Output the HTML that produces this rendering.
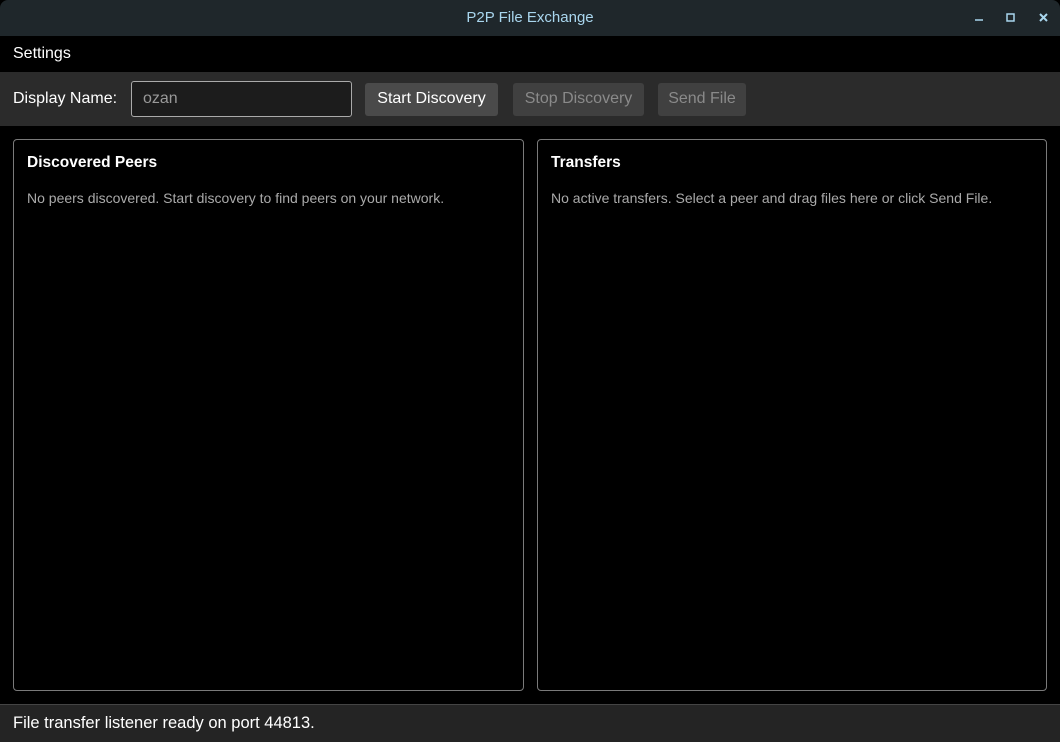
<!DOCTYPE html>
<html><head><style>
*{margin:0;padding:0;box-sizing:border-box}
body{width:1060px;height:742px;background:#000;font-family:"Liberation Sans",sans-serif;position:relative;overflow:hidden}
.tb{position:absolute;left:0;top:0;width:1060px;height:36px;background:#1f272b;border-radius:8px 8px 0 0}
.tb .t{position:absolute;left:0;right:0;top:9px;text-align:center;color:#a9d6ee;font-size:15px}
.menu{position:absolute;top:36px;left:0;width:1060px;height:36px;color:#fff;font-size:16px;padding:9px 13px}
.tool{position:absolute;top:72px;left:0;width:1060px;height:54px;background:#2b2b2b}
.lbl{position:absolute;left:13px;top:18px;color:#fff;font-size:16px}
.inp{position:absolute;left:131px;top:9px;width:221px;height:36px;border:1px solid #aaa;border-radius:3px;background:#1c1c1c;color:#999;font-size:16px;padding:8px 11px}
.btn{position:absolute;top:11px;height:33px;border-radius:3px;background:#4a4a4a;color:#fff;font-size:16px;text-align:center;padding-top:7px;white-space:nowrap}
.dis{background:#404040;color:#8a8a8a}
.panel{position:absolute;top:139px;height:552px;border:1px solid #7a7a7a;border-radius:4px}
.panel h3{position:absolute;left:13px;top:14px;color:#fff;font-size:15.5px}
.panel p{position:absolute;left:13px;top:50px;color:#aaa;font-size:14px;white-space:nowrap}
.status{position:absolute;top:704px;left:0;width:1060px;height:38px;background:#242424;border-top:1px solid #444;color:#fff;font-size:16.5px;padding:9px 13px}
</style></head><body>
<div class="tb"><div class="t">P2P File Exchange</div>
<svg style="position:absolute;left:970px;top:10px" width="85" height="16"><line x1="5" y1="10" x2="13" y2="10" stroke="#a9d6ee" stroke-width="1.5"/><rect x="37" y="4" width="7" height="7" fill="none" stroke="#a9d6ee" stroke-width="1.5"/><path d="M70 4l7 7M77 4l-7 7" stroke="#a9d6ee" stroke-width="2"/></svg></div>
<div class="menu">Settings</div>
<div class="tool"><div class="lbl">Display Name:</div><div class="inp">ozan</div>
<div class="btn" style="left:365px;width:133px">Start Discovery</div>
<div class="btn dis" style="left:513px;width:131px">Stop Discovery</div>
<div class="btn dis" style="left:658px;width:88px">Send File</div></div>
<div class="panel" style="left:13px;width:511px"><h3>Discovered Peers</h3><p>No peers discovered. Start discovery to find peers on your network.</p></div>
<div class="panel" style="left:537px;width:510px"><h3>Transfers</h3><p>No active transfers. Select a peer and drag files here or click Send File.</p></div>
<div class="status">File transfer listener ready on port 44813.</div>
</body></html>
